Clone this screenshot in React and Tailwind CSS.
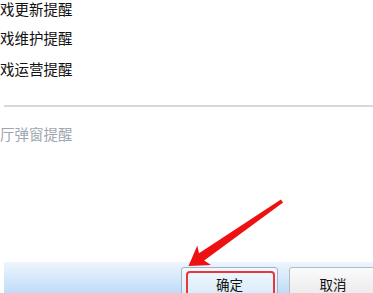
import React from "react";

const font = { fontFamily: '"Noto Sans CJK SC", "Noto Sans", sans-serif' };

export default function App() {
  return (
    <div
      className="relative flex h-[293px] w-[373px] flex-col overflow-hidden bg-white"
      style={font}
    >
      <div className="flex flex-col pt-[1px] text-[14.5px] leading-[16px] text-[#111]">
        <div>戏更新提醒</div>
        <div className="mt-[13px]">戏维护提醒</div>
        <div className="mt-[15px]">戏运营提醒</div>
      </div>

      <div className="ml-[4px] mt-[28px] h-[2px] bg-[#d8d8d8]" />

      <div className="mt-[19px] text-[14.5px] leading-[16px] text-[#9ea7b1]">
        厅弹窗提醒
      </div>

      <div className="mt-auto ml-[4px] flex h-[31px] gap-[11px] overflow-hidden bg-gradient-to-b from-[#eef5fd] to-[#bfdcf7] pl-[177px] pt-[5px]">
        <button className="relative h-[32px] w-[97px] shrink-0 rounded-[3px] border border-[#9fb3c8] bg-gradient-to-b from-[#f2f8fd] to-[#d6eaf9] text-[13.5px] text-[#111]">
          <span className="relative top-[1px]">确定</span>
          <span className="absolute left-[4px] right-[2px] top-[3px] -bottom-[4px] rounded-[4px] border-2 border-[#e8363c]" />
        </button>
        <button className="h-[32px] w-[88px] shrink-0 rounded-[3px] border border-[#b4bcc6] bg-gradient-to-b from-[#fbfbfb] to-[#e9e9e9] text-[13.5px] text-[#111]">
          <span className="relative top-[1px]">取消</span>
        </button>
      </div>

      <svg
        className="pointer-events-none absolute left-0 top-0"
        width="373"
        height="293"
        viewBox="0 0 373 293"
      >
        <polygon
          fill="#ee1111"
          points="283.1,202.6 204.2,260.6 211,265.1 188.5,266 197.3,245.4 199,253.2 280.9,199.4"
        />
      </svg>
    </div>
  );
}
